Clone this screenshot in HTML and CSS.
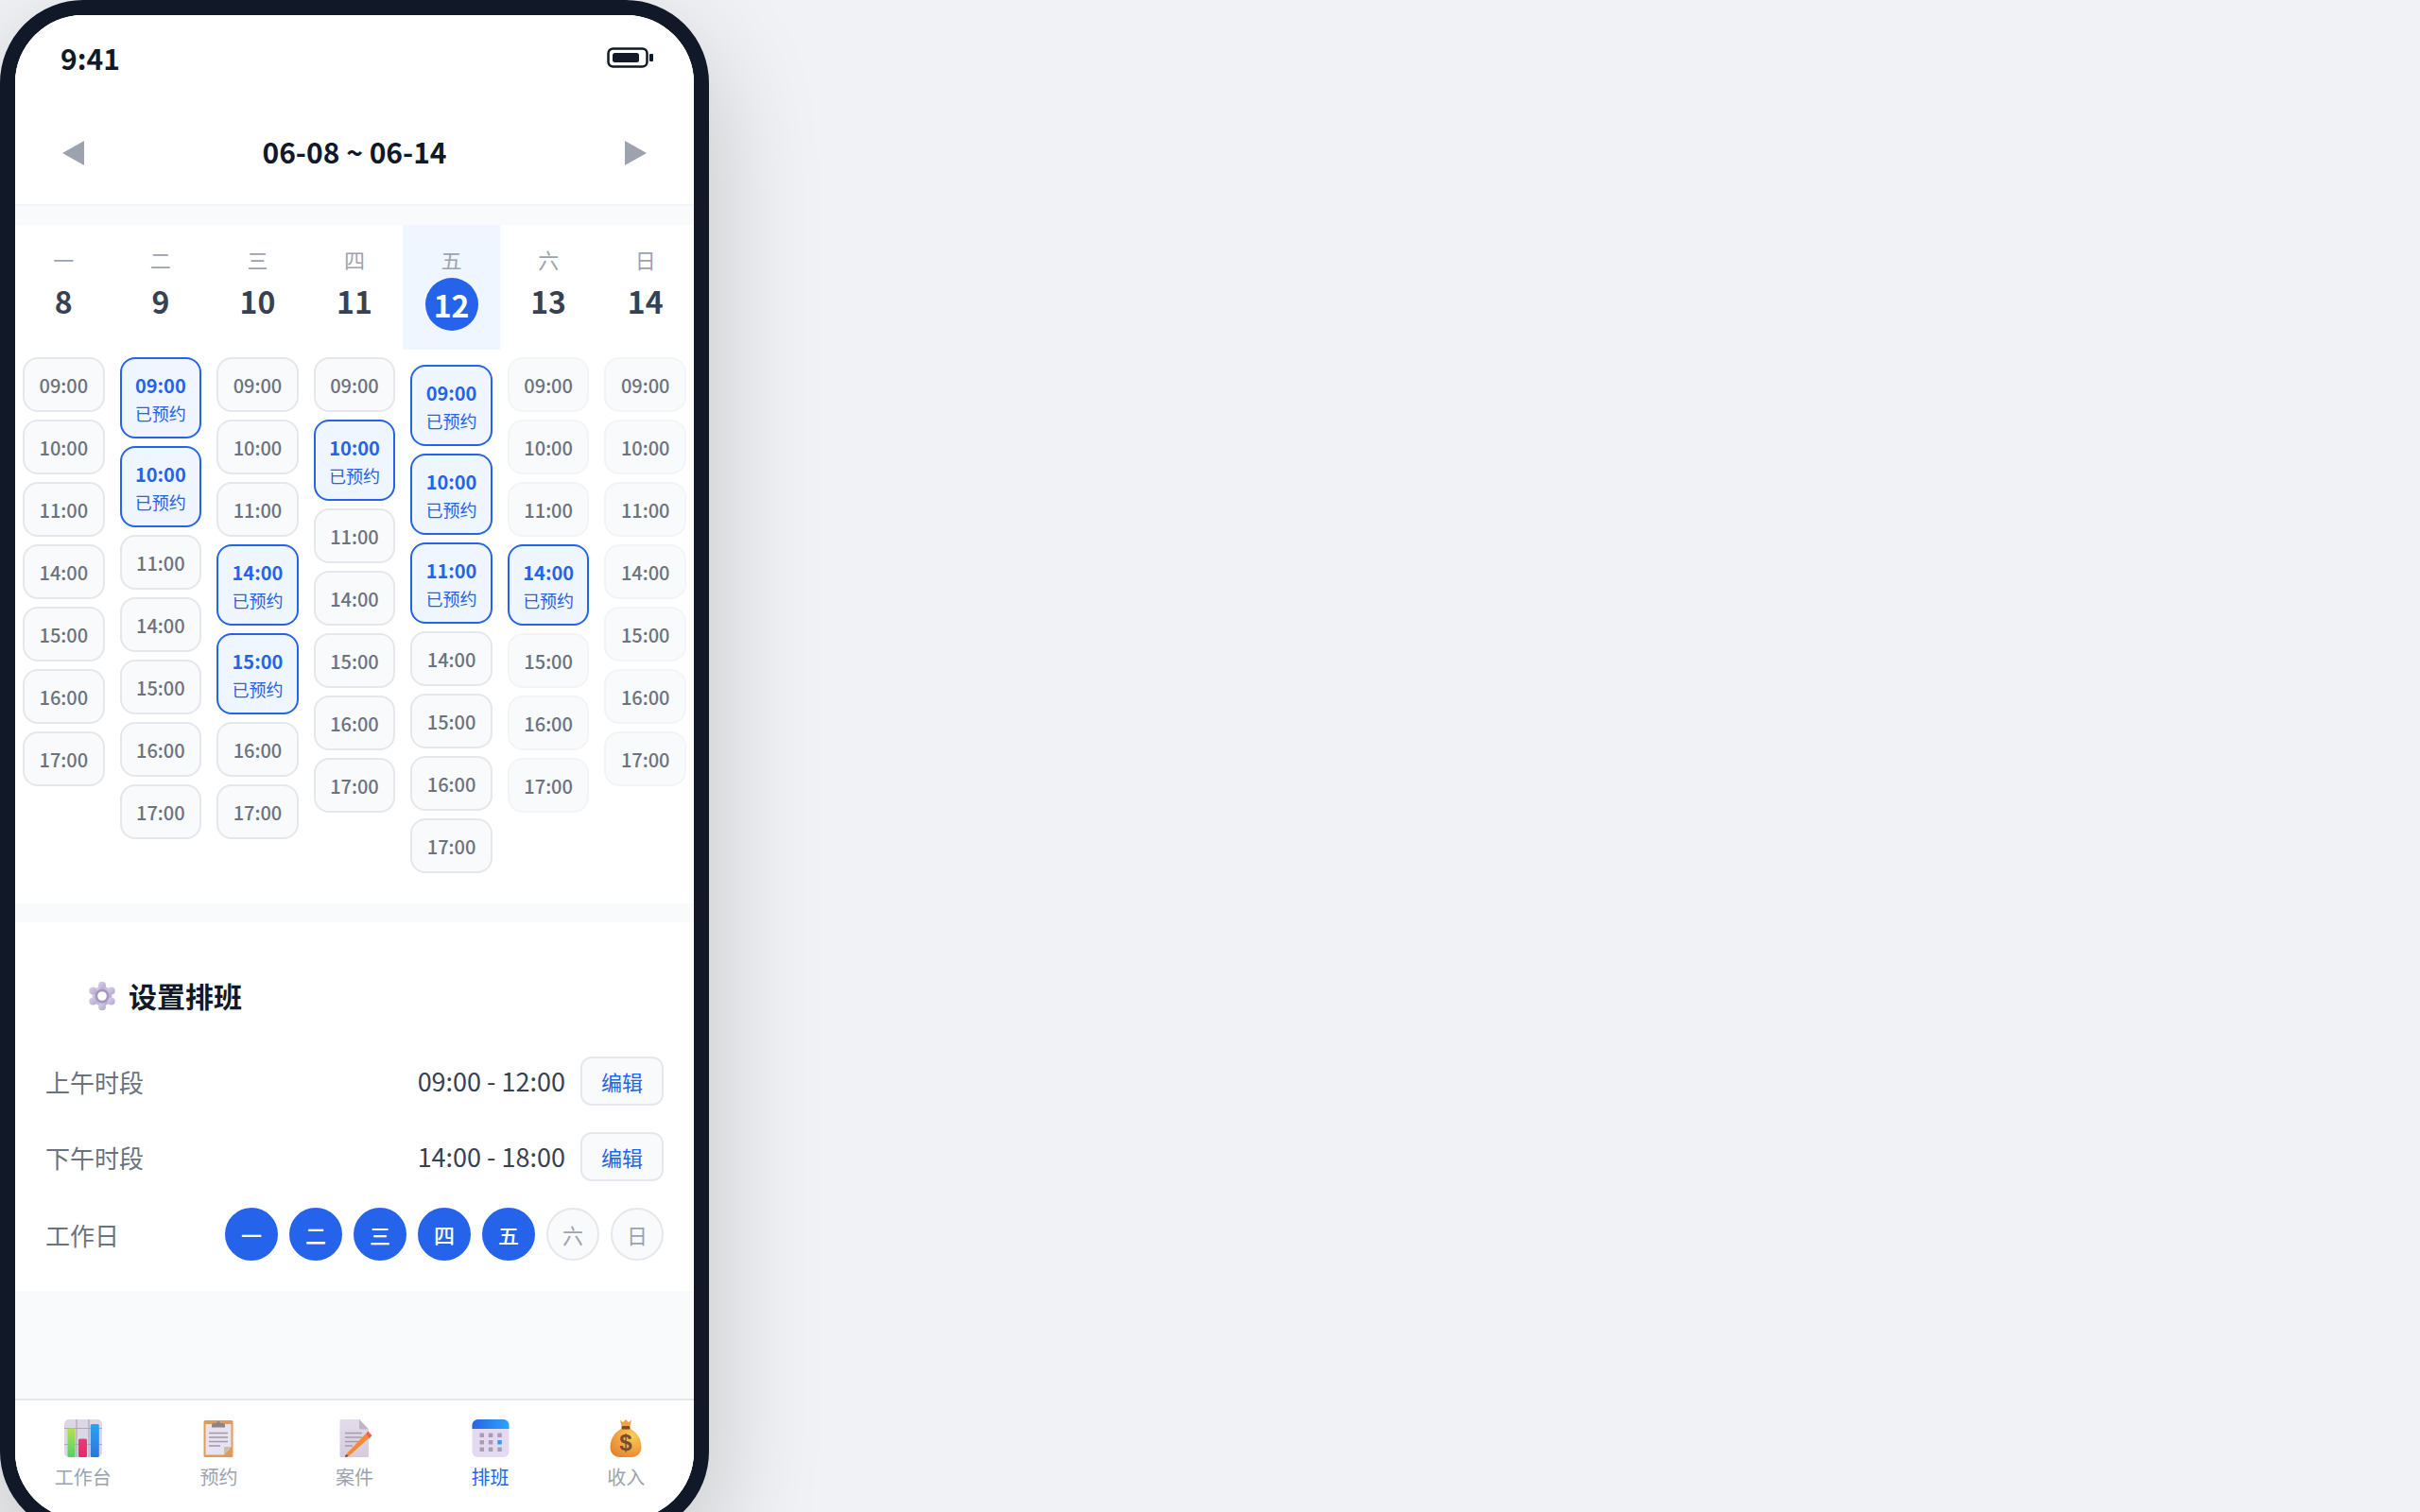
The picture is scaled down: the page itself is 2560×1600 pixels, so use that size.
FILE: index.html
```html
<!DOCTYPE html>
<html lang="zh-CN">

<head>
    <meta charset="UTF-8">
    <meta name="viewport" content="width=device-width, initial-scale=1.0">
    <title>排班</title>
    <link rel="stylesheet" href="styles.css">
</head>

<body>
    <div class="phone">
        <div class="screen">
            <div class="status-bar">
                <span class="status-time">9:41</span>
                <svg class="battery" width="50" height="22" viewBox="0 0 50 22">
                    <rect x="1.5" y="1.5" width="41" height="19" rx="5" fill="none" stroke="#111827" stroke-width="2.5"/>
                    <rect x="6" y="6" width="28" height="10" rx="2.5" fill="#111827"/>
                    <rect x="45" y="7" width="4" height="8" rx="1" fill="#111827"/>
                </svg>
            </div>

            <div class="week-nav">
                <svg class="arrow" width="24" height="26" viewBox="0 0 24 26"><polygon points="23,0 23,26 0,13"/></svg>
                <span class="week-title">06-08 ~ 06-14</span>
                <svg class="arrow" width="24" height="26" viewBox="0 0 24 26"><polygon points="1,0 1,26 24,13"/></svg>
            </div>

            <div class="week">
                <div class="day">
                    <div class="day-head"><span class="day-name">一</span><span class="day-num">8</span></div>
                    <div class="slots">
                        <div class="slot">09:00</div>
                        <div class="slot">10:00</div>
                        <div class="slot">11:00</div>
                        <div class="slot">14:00</div>
                        <div class="slot">15:00</div>
                        <div class="slot">16:00</div>
                        <div class="slot">17:00</div>
                    </div>
                </div>
                <div class="day">
                    <div class="day-head"><span class="day-name">二</span><span class="day-num">9</span></div>
                    <div class="slots">
                        <div class="slot booked"><strong>09:00</strong><small>已预约</small></div>
                        <div class="slot booked"><strong>10:00</strong><small>已预约</small></div>
                        <div class="slot">11:00</div>
                        <div class="slot">14:00</div>
                        <div class="slot">15:00</div>
                        <div class="slot">16:00</div>
                        <div class="slot">17:00</div>
                    </div>
                </div>
                <div class="day">
                    <div class="day-head"><span class="day-name">三</span><span class="day-num">10</span></div>
                    <div class="slots">
                        <div class="slot">09:00</div>
                        <div class="slot">10:00</div>
                        <div class="slot">11:00</div>
                        <div class="slot booked"><strong>14:00</strong><small>已预约</small></div>
                        <div class="slot booked"><strong>15:00</strong><small>已预约</small></div>
                        <div class="slot">16:00</div>
                        <div class="slot">17:00</div>
                    </div>
                </div>
                <div class="day">
                    <div class="day-head"><span class="day-name">四</span><span class="day-num">11</span></div>
                    <div class="slots">
                        <div class="slot">09:00</div>
                        <div class="slot booked"><strong>10:00</strong><small>已预约</small></div>
                        <div class="slot">11:00</div>
                        <div class="slot">14:00</div>
                        <div class="slot">15:00</div>
                        <div class="slot">16:00</div>
                        <div class="slot">17:00</div>
                    </div>
                </div>
                <div class="day today">
                    <div class="day-head"><span class="day-name">五</span><span class="day-num">12</span></div>
                    <div class="slots">
                        <div class="slot booked"><strong>09:00</strong><small>已预约</small></div>
                        <div class="slot booked"><strong>10:00</strong><small>已预约</small></div>
                        <div class="slot booked"><strong>11:00</strong><small>已预约</small></div>
                        <div class="slot">14:00</div>
                        <div class="slot">15:00</div>
                        <div class="slot">16:00</div>
                        <div class="slot">17:00</div>
                    </div>
                </div>
                <div class="day rest">
                    <div class="day-head"><span class="day-name">六</span><span class="day-num">13</span></div>
                    <div class="slots">
                        <div class="slot">09:00</div>
                        <div class="slot">10:00</div>
                        <div class="slot">11:00</div>
                        <div class="slot booked"><strong>14:00</strong><small>已预约</small></div>
                        <div class="slot">15:00</div>
                        <div class="slot">16:00</div>
                        <div class="slot">17:00</div>
                    </div>
                </div>
                <div class="day rest">
                    <div class="day-head"><span class="day-name">日</span><span class="day-num">14</span></div>
                    <div class="slots">
                        <div class="slot">09:00</div>
                        <div class="slot">10:00</div>
                        <div class="slot">11:00</div>
                        <div class="slot">14:00</div>
                        <div class="slot">15:00</div>
                        <div class="slot">16:00</div>
                        <div class="slot">17:00</div>
                    </div>
                </div>
            </div>

            <div class="settings">
                <div class="settings-title">
                    <svg width="32" height="32" viewBox="0 0 32 32">
                        <defs>
                            <linearGradient id="gearFill" x1="0" y1="0" x2="1" y2="1">
                                <stop offset="0" stop-color="#d9d2e8"/>
                                <stop offset="1" stop-color="#b3a6cf"/>
                            </linearGradient>
                        </defs>
                        <g fill="url(#gearFill)">
                            <circle cx="16" cy="16" r="10.5"/>
                            <circle cx="16" cy="4.8" r="4"/>
                            <circle cx="16" cy="27.2" r="4"/>
                            <circle cx="6.3" cy="10.4" r="4"/>
                            <circle cx="25.7" cy="10.4" r="4"/>
                            <circle cx="6.3" cy="21.6" r="4"/>
                            <circle cx="25.7" cy="21.6" r="4"/>
                        </g>
                        <circle cx="16" cy="16" r="7.5" fill="#a596bd"/>
                        <circle cx="16" cy="16" r="4.8" fill="#fff"/>
                    </svg>
                    <span>设置排班</span>
                </div>
                <div class="row">
                    <span class="row-label">上午时段</span>
                    <div class="row-right">
                        <span class="row-value">09:00 - 12:00</span>
                        <button class="edit-btn">编辑</button>
                    </div>
                </div>
                <div class="row">
                    <span class="row-label">下午时段</span>
                    <div class="row-right">
                        <span class="row-value">14:00 - 18:00</span>
                        <button class="edit-btn">编辑</button>
                    </div>
                </div>
                <div class="row">
                    <span class="row-label">工作日</span>
                    <div class="weekdays">
                        <span class="weekday on">一</span>
                        <span class="weekday on">二</span>
                        <span class="weekday on">三</span>
                        <span class="weekday on">四</span>
                        <span class="weekday on">五</span>
                        <span class="weekday">六</span>
                        <span class="weekday">日</span>
                    </div>
                </div>
            </div>

            <div class="spacer"></div>

            <div class="tabbar">
                <div class="tab">
                    <svg width="40" height="40" viewBox="0 0 40 40">
                        <defs>
                            <linearGradient id="barGreen" x1="0" y1="0" x2="0" y2="1">
                                <stop offset="0" stop-color="#b5e04a"/>
                                <stop offset="1" stop-color="#4fd268"/>
                            </linearGradient>
                            <linearGradient id="barPink" x1="0" y1="0" x2="0" y2="1">
                                <stop offset="0" stop-color="#e83a78"/>
                                <stop offset="1" stop-color="#e52a6a"/>
                            </linearGradient>
                            <linearGradient id="barBlue" x1="0" y1="0" x2="0" y2="1">
                                <stop offset="0" stop-color="#29a3f5"/>
                                <stop offset="1" stop-color="#2f74d8"/>
                            </linearGradient>
                        </defs>
                        <rect width="40" height="40" rx="5" fill="#ddd6e5"/>
                        <path d="M13 0V40M26 0V40M0 9.500H40M0 26.500H40" stroke="#aea7b8" stroke-width="1.200" fill="none"/>
                        <rect x="3.500" y="9.500" width="8" height="30.500" rx="1.500" fill="url(#barGreen)"/>
                        <rect x="15" y="20.500" width="9" height="19.500" rx="1.500" fill="url(#barPink)"/>
                        <rect x="27.800" y="5" width="9" height="35" rx="1.500" fill="url(#barBlue)"/>
                    </svg>
                    <span>工作台</span>
                </div>
                <div class="tab">
                    <svg width="40" height="40" viewBox="0 0 40 40">
                        <rect x="4.500" y="1" width="31" height="39" rx="1.500" fill="#dd9c5e"/>
                        <path d="M6.500 5H33.500V29L26 37.500H6.500Z" fill="#e8e2ef"/>
                        <path d="M33.500 29H26V37.500Z" fill="#c9bfa8"/>
                        <path d="M13 8.500V6A2 2 0 0 1 15 4H18A2 2 0 0 1 22 4H25A2 2 0 0 1 27 6V8.500Z" fill="#8a848f"/>
                        <path d="M10 14.500H30M10 19H30M10 23.500H30M10 28H22" stroke="#9f99a8" stroke-width="1.400" fill="none"/>
                    </svg>
                    <span>预约</span>
                </div>
                <div class="tab">
                    <svg width="40" height="40" viewBox="0 0 40 40">
                        <defs>
                            <linearGradient id="memoPaper" x1="0" y1="0" x2="0" y2="1">
                                <stop offset="0" stop-color="#e2dcea"/>
                                <stop offset="1" stop-color="#d5cbdf"/>
                            </linearGradient>
                        </defs>
                        <path d="M4.500 1.500A1.500 1.500 0 0 1 6 0H25L35 10.500V38.500A1.500 1.500 0 0 1 33.500 40H6A1.500 1.500 0 0 1 4.500 38.500Z" fill="url(#memoPaper)"/>
                        <path d="M25 0L35 10.500H26.500A1.500 1.500 0 0 1 25 9Z" fill="#bdb5c6"/>
                        <path d="M10 14.500H28M10 19H28M10 23.500H24M10 28H18" stroke="#a49da9" stroke-width="1.400" fill="none"/>
                        <path d="M12 36L10 40L14.500 38.500L35 20L32 15Z" fill="#f58a32"/>
                        <path d="M32 15L34.500 12.500L38.500 17L35.500 20.500Z" fill="#f4604a"/>
                        <path d="M10 40L11 37L13.500 39Z" fill="#5c3a4a"/>
                    </svg>
                    <span>案件</span>
                </div>
                <div class="tab active">
                    <svg width="40" height="40" viewBox="0 0 40 40">
                        <defs>
                            <linearGradient id="calTop" x1="0" y1="0" x2="1" y2="0">
                                <stop offset="0" stop-color="#2b62e0"/>
                                <stop offset="1" stop-color="#2aa5fb"/>
                            </linearGradient>
                        </defs>
                        <rect x="0.500" y="0" width="39" height="40" rx="6" fill="#e3d9f0"/>
                        <path d="M0.500 10V6A6 6 0 0 1 6.500 0H33.500A6 6 0 0 1 39.500 6V10Z" fill="url(#calTop)"/>
                        <g fill="#a69fb3">
                            <rect x="8.500" y="14.500" width="4.500" height="4.500" rx="0.500"/>
                            <rect x="17.800" y="14.500" width="4.500" height="4.500" rx="0.500"/>
                            <rect x="27.300" y="14.500" width="4.500" height="4.500" rx="0.500"/>
                            <rect x="8.500" y="22" width="4.500" height="4.500" rx="0.500"/>
                            <rect x="17.800" y="22" width="4.500" height="4.500" rx="0.500"/>
                            <rect x="8.500" y="29.500" width="4.500" height="4.500" rx="0.500"/>
                            <rect x="17.800" y="29.500" width="4.500" height="4.500" rx="0.500"/>
                            <rect x="27.300" y="29.500" width="4.500" height="4.500" rx="0.500"/>
                        </g>
                        <rect x="27.300" y="22" width="4.500" height="4.500" rx="0.500" fill="#2a9df4"/>
                    </svg>
                    <span>排班</span>
                </div>
                <div class="tab">
                    <svg width="40" height="40" viewBox="0 0 40 40">
                        <defs>
                            <radialGradient id="bagFill" cx="0.700" cy="0.250" r="0.900">
                                <stop offset="0" stop-color="#f9cf56"/>
                                <stop offset="1" stop-color="#e57f2f"/>
                            </radialGradient>
                        </defs>
                        <path d="M15.500 9.500C8 14 3.500 21 3.500 29C3.500 36 8 40 14 40H26C32 40 36.500 36 36.500 29C36.500 21 32 14 24.500 9.500Z" fill="url(#bagFill)"/>
                        <path d="M14 0.500L17 3L20 0L23 3L26 0.500L24.500 7H15.500Z" fill="#f2a23e"/>
                        <rect x="15.500" y="7" width="9" height="3.500" rx="1" fill="#7a4a33"/>
                        <text class="bag-mark" x="20" y="33" text-anchor="middle">$</text>
                    </svg>
                    <span>收入</span>
                </div>
            </div>
        </div>
    </div>
</body>

</html>
```

FILE: styles.css
```css
* {
    box-sizing: border-box;
}

html,
body {
    height: 100%;
}

body {
    margin: 0;
    overflow: hidden;
    background-color: #f0f2f5;
    font-family: "Noto Sans CJK SC", "Noto Sans", sans-serif;
    line-height: 1.5;
    color: #111827;
}

.phone {
    width: 750px;
    height: 1624px;
    border: 16px solid #111827;
    border-radius: 88px;
    background-color: #fff;
    box-shadow: 0 40px 120px rgba(0, 0, 0, 0.2);
}

.screen {
    display: flex;
    flex-direction: column;
    height: 100%;
    border-radius: 72px;
    background-color: #f9fafb;
}

/* status bar */
.status-bar {
    display: flex;
    justify-content: space-between;
    align-items: flex-start;
    height: 92px;
    padding: 21px 42px 0 48px;
    border-radius: 72px 72px 0 0;
    background-color: #fff;
}

.status-time {
    font-size: 30px;
    font-weight: 600;
    line-height: 48px;
}

.battery {
    margin-top: 13px;
}

/* week switcher */
.week-nav {
    display: flex;
    justify-content: space-between;
    align-items: center;
    height: 110px;
    padding: 0 50px;
    background-color: #fff;
    border-bottom: 2px solid #f3f4f6;
}

.arrow {
    fill: #9ca3af;
}

.week-title {
    padding-bottom: 3px;
    font-size: 30px;
    font-weight: 600;
}

/* week grid */
.week {
    display: grid;
    grid-template-columns: repeat(7, 1fr);
    align-items: start;
    height: 718px;
    margin-top: 20px;
    background-color: #fff;
}

.day-head {
    display: flex;
    flex-direction: column;
    align-items: center;
    padding: 19px 0 20px;
}

.day-name {
    margin-bottom: 3px;
    font-size: 22px;
    line-height: 34px;
    color: #9ca3af;
}

.day-num {
    width: 56px;
    font-size: 32px;
    font-weight: 700;
    line-height: 48px;
    text-align: center;
    color: #374151;
}

.today .day-head {
    background-color: #eff6ff;
}

.today .day-num {
    height: 56px;
    line-height: 56px;
    border-radius: 50%;
    background-color: #2563eb;
    color: #fff;
}

.slots {
    display: flex;
    flex-direction: column;
    gap: 8px;
    padding: 16px 8px;
}

.slot {
    display: flex;
    flex-direction: column;
    align-items: center;
    padding: 13px 0 11px;
    border: 2px solid #e5e7eb;
    border-radius: 16px;
    background-color: #f9fafb;
    font-size: 20px;
    font-weight: 500;
    color: #6b7280;
}

.rest .slot {
    border-color: #f3f4f6;
}

.rest .slot.booked,
.slot.booked {
    border-color: #2563eb;
    background-color: #eff6ff;
    color: #2563eb;
}

.slot strong {
    font-weight: 700;
}

.slot small {
    font-size: 18px;
    font-weight: 400;
    line-height: 28px;
}

/* settings */
.settings {
    margin-top: 20px;
    padding: 55px 32px 32px;
    background-color: #fff;
}

.settings-title {
    display: flex;
    align-items: center;
    gap: 12px;
    margin-bottom: 42px;
    padding-left: 44px;
    font-size: 30px;
    font-weight: 600;
    line-height: 45px;
}

.row {
    display: flex;
    justify-content: space-between;
    align-items: center;
    margin-bottom: 28px;
}

.row:last-child {
    margin-bottom: 0;
}

.row-label {
    font-size: 26px;
    color: #6b7280;
}

.row-right {
    display: flex;
    align-items: center;
    gap: 16px;
}

.row-value {
    font-size: 27px;
    color: #374151;
}

.edit-btn {
    height: 52px;
    padding: 0 20px;
    border: 2px solid #e5e7eb;
    border-radius: 12px;
    background-color: #f9fafb;
    font-family: inherit;
    font-size: 22px;
    color: #2563eb;
}

.weekdays {
    display: flex;
    gap: 12px;
}

.weekday {
    display: flex;
    justify-content: center;
    align-items: center;
    width: 56px;
    height: 56px;
    border: 2px solid #e5e7eb;
    border-radius: 50%;
    background-color: #f9fafb;
    font-size: 22px;
    color: #9ca3af;
}

.weekday.on {
    border-color: #2563eb;
    background-color: #2563eb;
    font-weight: 500;
    color: #fff;
}

.spacer {
    flex: 1;
}

/* bottom tabs */
.tabbar {
    display: grid;
    grid-template-columns: repeat(5, 1fr);
    height: 128px;
    padding-top: 20px;
    border-top: 2px solid #e5e7eb;
    border-radius: 0 0 72px 72px;
    background-color: #fff;
}

.tab {
    display: flex;
    flex-direction: column;
    align-items: center;
    gap: 6px;
    font-size: 20px;
    line-height: 30px;
    color: #9ca3af;
}

.tab.active {
    color: #2563eb;
}

.bag-mark {
    font-family: "Liberation Sans", sans-serif;
    font-size: 24px;
    font-weight: 700;
    fill: #7a4a33;
}
```
